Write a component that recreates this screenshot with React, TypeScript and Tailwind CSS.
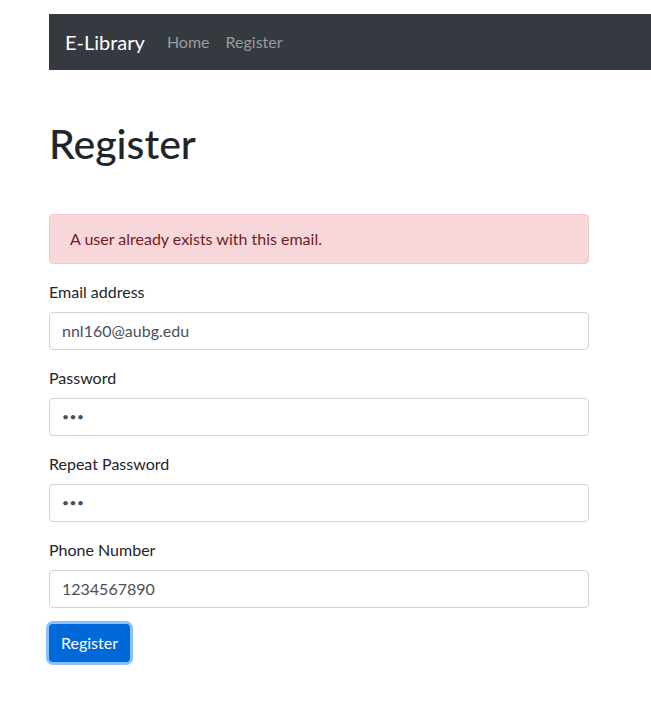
export default function App() {
  const fields = [
    { label: "Email address", value: "nnl160@aubg.edu", masked: false },
    { label: "Password", value: "•••", masked: true },
    { label: "Repeat Password", value: "•••", masked: true },
    { label: "Phone Number", value: "1234567890", masked: false },
  ];

  return (
    <div className="min-h-screen bg-white pt-[14px] pl-[49px] text-[#212529] font-['Lato',sans-serif] text-base">
      <nav className="flex h-[56px] items-center bg-[#343a40] pl-4">
        <span className="mr-[22px] text-xl text-white">E-Library</span>
        <div className="flex gap-4 text-[#999b9e]">
          <span>Home</span>
          <span>Register</span>
        </div>
      </nav>

      <div className="w-[540px]">
        <h1 className="mt-[50px] mb-[46px] text-[41px] leading-[48px] font-medium">Register</h1>

        <div className="mb-4 rounded border border-[#f5c6cb] bg-[#f8d7da] px-5 py-3 leading-6 text-[#721c24]">
          A user already exists with this email.
        </div>

        {fields.map((f) => (
          <div key={f.label} className="mb-4">
            <div className="mb-2 leading-6">{f.label}</div>
            <div className="flex h-[38px] items-center rounded border border-[#ced4da] px-3 text-[#495057]">
              {f.masked ? <span className="text-[12px] tracking-[0.5px]">{f.value}</span> : f.value}
            </div>
          </div>
        ))}

        <button className="h-[38px] rounded bg-[#0069d9] px-3 text-white shadow-[0_0_0_3px_#8cc0fb]">
          Register
        </button>
      </div>
    </div>
  );
}
